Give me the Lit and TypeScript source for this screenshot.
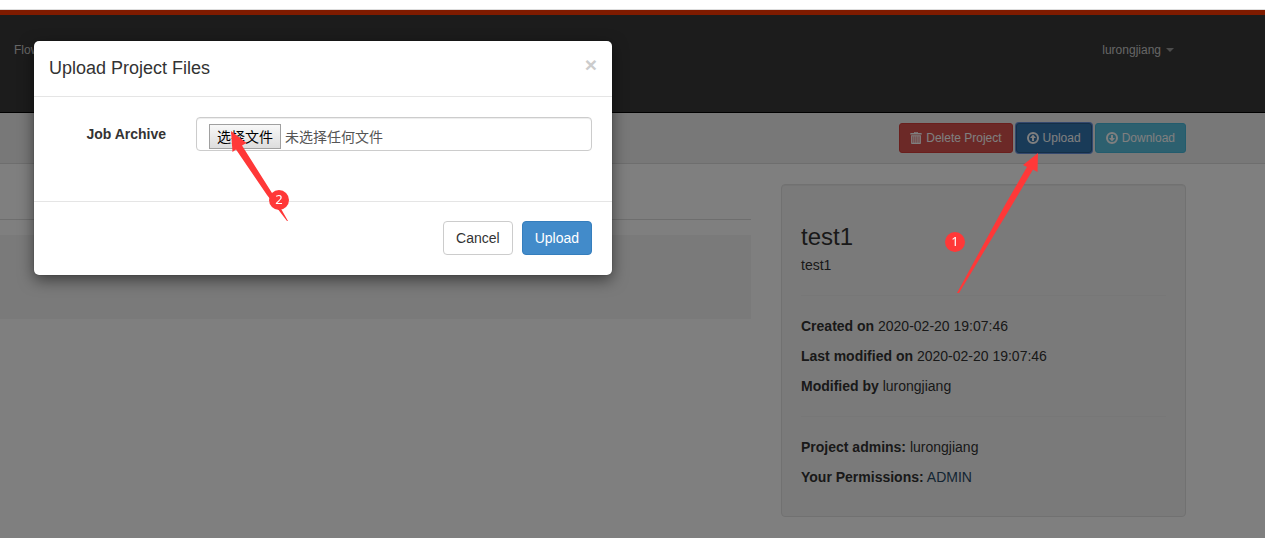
import { LitElement, html, css, svg } from "lit";
import { customElement } from "lit/decorators.js";

const trashIcon = svg`<svg class="icon" viewBox="0 0 12 12" aria-hidden="true">
  <path fill="currentColor" fill-rule="evenodd" d="M4 1C4 .4 4.400 0 5 0h2c.6 0 1 .4 1 1h3c.5 0 .8.300.8.700V2.500H.2V1.700C.2 1.300.5 1 1 1zM5 .7V1h2V.7zM1.100 3.300h9.800v7.700c0 .6-.4 1-1 1H2.100c-.6 0-1-.4-1-1zM2.500 4.300v6.400h.8V4.300zM4.500 4.300v6.400h.8V4.300zM6.500 4.300v6.400h.8V4.300zM8.600 4.300v6.400h.8V4.300z"/>
</svg>`;

const circleArrow = (d: string) => svg`<svg class="icon" viewBox="0 0 12 12" aria-hidden="true">
  <circle cx="6" cy="6" r="5" fill="none" stroke="currentColor" stroke-width="2"/>
  <path fill="currentColor" d=${d}/>
</svg>`;

const upIcon = circleArrow("M6 2.600 9 6H7v3H5V6H3z");
const downIcon = circleArrow("M6 9.400 3 6h2V3h2v3h2z");

@customElement("app-root")
export class AppRoot extends LitElement {
  static styles = css`
    :host {
      display: flex;
      flex-direction: column;
      min-height: 100vh;
      font: 14px/20px "Liberation Sans", Arial, "Noto Sans CJK SC", sans-serif;
      color: #333;
      background: #fff;
    }
    * { box-sizing: border-box; }
    .strip { height: 10px; border-bottom: 1px solid #ddd; }
    .page { position: relative; flex: 1; overflow: hidden; }
    .nav {
      display: flex;
      justify-content: space-between;
      height: 103px;
      padding: 25px 91px 0 14px;
      border-top: 5px solid #ff3601;
      border-bottom: 1px solid #000;
      background: #383838;
      font-size: 12px;
    }
    .nav a {
      display: flex;
      align-items: center;
      gap: 5px;
      height: 20px;
      color: #ccc;
      text-decoration: none;
    }
    .caret {
      border: 4px solid transparent;
      border-top-color: #999;
      border-bottom: 0;
    }
    .toolbar {
      display: flex;
      justify-content: flex-end;
      gap: 3px;
      padding: 10px 79px;
      border-bottom: 1px solid #ddd;
      background: #f1f1f1;
    }
    .btn {
      border: 1px solid;
      border-radius: 4px;
      padding: 6px 12px;
      font: inherit;
      color: #fff;
    }
    .small {
      display: flex;
      align-items: center;
      gap: 4px;
      height: 30px;
      padding: 0 10px;
      border-radius: 3px;
      font-size: 12px;
    }
    .icon { width: 12px; height: 12px; }
    .danger { background: #d9534f; border-color: #d43f3a; }
    .active { background: #3276b1; border-color: #285e8e; box-shadow: 0 0 0 1px #6690dd; }
    .info { background: #5bc0de; border-color: #46b8da; }
    .primary { background: #428bca; border-color: #357ebd; }
    .plain { background: #fff; border-color: #ccc; color: #333; }
    .columns {
      display: grid;
      grid-template-columns: minmax(0, 1fr) 405px;
      gap: 30px;
      padding: 20px 79px 20px 0;
    }
    .tabs { height: 36px; border-bottom: 1px solid #ddd; }
    .empty { height: 84px; margin-top: 15px; background: #f5f5f5; }
    .well {
      min-height: 333px;
      padding: 19px;
      border: 1px solid #e3e3e3;
      border-radius: 4px;
      background: #f5f5f5;
      box-shadow: inset 0 1px 1px rgba(0, 0, 0, 0.05);
    }
    .well h1 { margin: 20px 0 5px; font-size: 24px; font-weight: 400; line-height: 26px; }
    .well p { margin: 0 0 10px; }
    .well hr { margin: 20px 0; border: 0; border-top: 1px solid #eee; }
    .well a { color: #2a4a66; text-decoration: none; }
    .backdrop {
      position: absolute;
      inset: 0;
      padding: 31px 34px;
      background: rgba(0, 0, 0, 0.5);
    }
    .modal {
      max-width: 578px;
      border-radius: 5px;
      background: #fff;
      box-shadow: 0 5px 15px rgba(0, 0, 0, 0.5), 0 0 1px rgba(0, 0, 0, 0.6);
    }
    .head {
      display: flex;
      justify-content: space-between;
      align-items: center;
      height: 56px;
      padding: 0 15px 2px;
      border-bottom: 1px solid #e5e5e5;
    }
    .head h2 { margin: 0; font-size: 18px; font-weight: 400; line-height: 26px; }
    .close {
      padding: 0 0 6px;
      border: 0;
      background: none;
      font: bold 21px/21px "Liberation Sans", Arial, sans-serif;
      color: #ccc;
    }
    .body {
      display: grid;
      grid-template-columns: 132px 1fr;
      gap: 30px;
      padding: 20px 20px 50px 0;
    }
    .body label { padding-top: 7px; text-align: right; font-weight: 700; }
    .file {
      position: relative;
      display: flex;
      align-items: flex-start;
      gap: 4px;
      height: 34px;
      padding: 6px 12px;
      border: 1px solid #ccc;
      border-radius: 4px;
      box-shadow: inset 0 1px 1px rgba(0, 0, 0, 0.075);
      color: #555;
    }
    .file input { position: absolute; inset: 0; width: 100%; opacity: 0; }
    .choose {
      height: 25px;
      padding: 2px 7px;
      border: 1px solid #a0a0a0;
      background: linear-gradient(#f8f8f8, #ddd);
      line-height: 20px;
      color: #000;
    }
    .status { padding-top: 3px; line-height: 20px; }
    .foot {
      display: flex;
      justify-content: flex-end;
      gap: 9px;
      padding: 19px 20px 20px;
      border-top: 1px solid #e5e5e5;
    }
    .marks { position: absolute; top: 0; left: 0; pointer-events: none; }
    .marks text { font: 13px "Noto Sans", sans-serif; fill: #fff; text-anchor: middle; }
  `;

  render() {
    return html`
      <div class="strip"></div>
      <div class="page">
        <nav class="nav">
          <a href="#flow">Flow</a>
          <a href="#user">lurongjiang <span class="caret"></span></a>
        </nav>
        <div class="toolbar">
          <button class="btn small danger">${trashIcon}Delete Project</button>
          <button class="btn small active">${upIcon}Upload</button>
          <button class="btn small info">${downIcon}Download</button>
        </div>
        <main class="columns">
          <section>
            <div class="tabs"></div>
            <div class="empty"></div>
          </section>
          <aside class="well">
            <h1>test1</h1>
            <p>test1</p>
            <hr />
            <p><strong>Created on</strong> 2020-02-20 19:07:46</p>
            <p><strong>Last modified on</strong> 2020-02-20 19:07:46</p>
            <p><strong>Modified by</strong> lurongjiang</p>
            <hr />
            <p><strong>Project admins:</strong> lurongjiang</p>
            <p><strong>Your Permissions:</strong> <a href="#permissions">ADMIN</a></p>
          </aside>
        </main>
        <div class="backdrop">
          <form class="modal" role="dialog" aria-labelledby="title">
            <div class="head">
              <h2 id="title">Upload Project Files</h2>
              <button class="close" type="button" aria-label="Close">×</button>
            </div>
            <div class="body">
              <label for="archive">Job Archive</label>
              <div class="file">
                <span class="choose">选择文件</span>
                <span class="status">未选择任何文件</span>
                <input id="archive" type="file" />
              </div>
            </div>
            <div class="foot">
              <button class="btn plain" type="button">Cancel</button>
              <button class="btn primary" type="button">Upload</button>
            </div>
          </form>
        </div>
        <svg class="marks" width="1265" height="528" viewBox="0 10 1265 528">
          <g fill="#ff3838">
            <path d="M1038 153 1023 165 1027 167 1005 205 957 293 959 293 1012 205 1033 169.500 1037.500 172z" />
            <circle cx="955" cy="242" r="10" />
            <path d="M231 131 232.500 152 236 149.500 267 195 287 221 288 221 272 193 242 145.500 246.500 143z" />
            <circle cx="279" cy="200" r="10" />
          </g>
          <text x="955" y="246">1</text>
          <text x="279" y="204">2</text>
        </svg>
      </div>
    `;
  }
}
